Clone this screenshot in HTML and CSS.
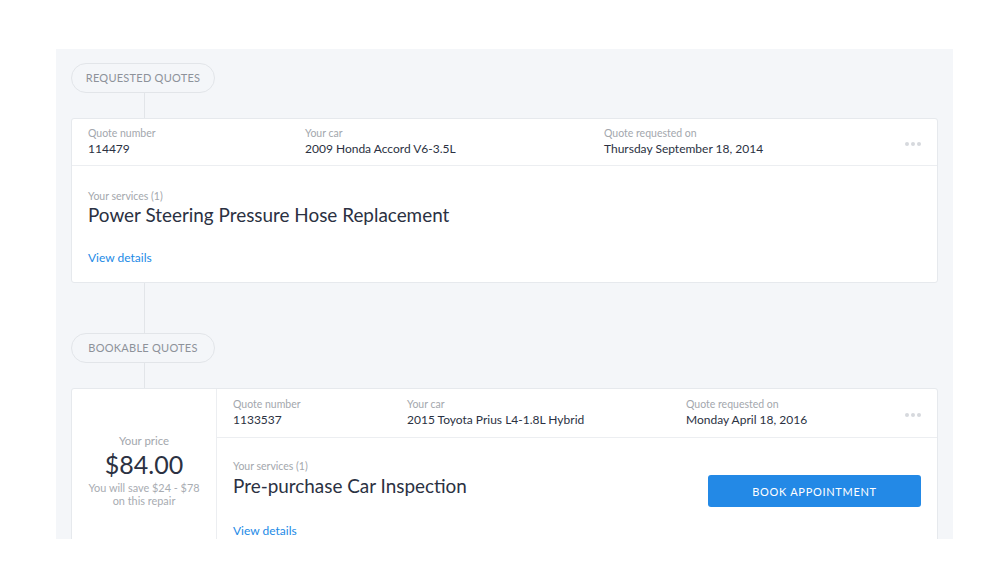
FILE: index.html
```html
<!DOCTYPE html>
<html lang="en">
<head>
    <meta charset="UTF-8">
    <title>Quotes</title>
    <link rel="stylesheet" href="styles.css">
</head>
<body>
    <div class="board">
        <div class="section-pill">Requested quotes</div>
        <div class="connector short"></div>

        <div class="card">
            <div class="card-head head-requested">
                <div class="field">
                    <div class="label">Quote number</div>
                    <div class="value">114479</div>
                </div>
                <div class="field">
                    <div class="label">Your car</div>
                    <div class="value">2009 Honda Accord V6-3.5L</div>
                </div>
                <div class="field">
                    <div class="label">Quote requested on</div>
                    <div class="value">Thursday September 18, 2014</div>
                </div>
                <div class="dots"><span></span><span></span><span></span></div>
            </div>
            <div class="card-body">
                <div class="label">Your services (1)</div>
                <div class="service">Power Steering Pressure Hose Replacement</div>
                <a class="details" href="#">View details</a>
            </div>
        </div>

        <div class="connector long"></div>
        <div class="section-pill">Bookable quotes</div>
        <div class="connector short"></div>

        <div class="card card-split">
            <div class="price-box">
                <div class="price-label">Your price</div>
                <div class="price">$84.00</div>
                <div class="save">You will save $24 - $78<br>on this repair</div>
            </div>
            <div class="card-main">
                <div class="card-head head-bookable">
                    <div class="field">
                        <div class="label">Quote number</div>
                        <div class="value">1133537</div>
                    </div>
                    <div class="field">
                        <div class="label">Your car</div>
                        <div class="value">2015 Toyota Prius L4-1.8L Hybrid</div>
                    </div>
                    <div class="field">
                        <div class="label">Quote requested on</div>
                        <div class="value">Monday April 18, 2016</div>
                    </div>
                    <div class="dots"><span></span><span></span><span></span></div>
                </div>
                <div class="card-body body-bookable">
                    <div class="service-info">
                        <div class="label">Your services (1)</div>
                        <div class="service">Pre-purchase Car Inspection</div>
                        <a class="details" href="#">View details</a>
                    </div>
                    <button class="book-btn">Book appointment</button>
                </div>
            </div>
        </div>
    </div>
</body>
</html>
```

FILE: styles.css
```css
body {
    margin: 0;
    background: #fff;
    font-family: Lato, "Open Sans", sans-serif;
    color: #2b3142;
}
.board {
    width: 867px;
    height: 476px;
    margin: 49px 0 0 56px;
    padding: 14px 15px 0 15px;
    background: #f4f6f9;
    overflow: hidden;
}
.section-pill {
    width: 142px;
    height: 28px;
    line-height: 28px;
    border: 1px solid #e2e5e9;
    border-radius: 15px;
    text-align: center;
    font-size: 11px;
    letter-spacing: 0.25px;
    text-transform: uppercase;
    color: #8d929a;
}
.connector {
    width: 1px;
    margin-left: 73px;
    background: #e2e5e9;
}
.connector.short {
    height: 25px;
}
.connector.long {
    height: 50px;
}
.card {
    background: #fff;
    border: 1px solid #e6e9ed;
    border-radius: 3px;
}
.card-head {
    display: flex;
    align-items: center;
    padding: 8px 16px 8px 16px;
    border-bottom: 1px solid #eceef1;
}
.head-requested .field:nth-child(1) { width: 217px; }
.head-requested .field:nth-child(2) { width: 299px; }
.head-bookable {
    padding-top: 9px;
    padding-bottom: 9px;
}
.head-bookable .field:nth-child(1) { width: 174px; }
.head-bookable .field:nth-child(2) { width: 279px; }
.card-head .field:nth-child(3) {
    flex: 1;
}
.label {
    font-size: 10.5px;
    line-height: 13px;
    color: #a3a7ad;
}
.value {
    font-size: 12px;
    line-height: 16px;
    color: #2b3142;
    margin-top: 1px;
}
.dots {
    display: flex;
    gap: 2px;
    margin-top: 4px;
}
.dots span {
    width: 4px;
    height: 4px;
    border-radius: 50%;
    background: #d6d9dd;
}
.card-body {
    padding: 24px 16px 16px 16px;
}
.service {
    font-size: 18.9px;
    line-height: 24px;
    color: #2b3142;
}
.details {
    display: inline-block;
    margin-top: 23px;
    font-size: 12px;
    line-height: 16px;
    color: #1d8ae6;
    text-decoration: none;
}
.card-split {
    display: flex;
}
.price-box {
    width: 144px;
    border-right: 1px solid #eceef1;
    padding-top: 45px;
    text-align: center;
}
.price-label {
    font-size: 11.4px;
    line-height: 14px;
    color: #a3a7ad;
}
.price {
    font-size: 25px;
    line-height: 28px;
    margin-top: 2px;
    color: #2b3142;
}
.save {
    font-size: 10.9px;
    line-height: 13px;
    color: #a8acb2;
    margin-top: 3px;
}
.card-main {
    flex: 1;
}
.body-bookable {
    display: flex;
    justify-content: space-between;
    align-items: flex-start;
    padding-top: 22px;
    padding-bottom: 40px;
}
.body-bookable .service {
    margin-top: 1px;
}
.body-bookable .details {
    margin-top: 25px;
}
.book-btn {
    width: 213px;
    height: 32px;
    margin-top: 15px;
    border: none;
    border-radius: 3px;
    background: #2389e6;
    color: #fff;
    font-family: Lato, "Open Sans", sans-serif;
    font-size: 11px;
    letter-spacing: 0.7px;
    text-transform: uppercase;
}
```
